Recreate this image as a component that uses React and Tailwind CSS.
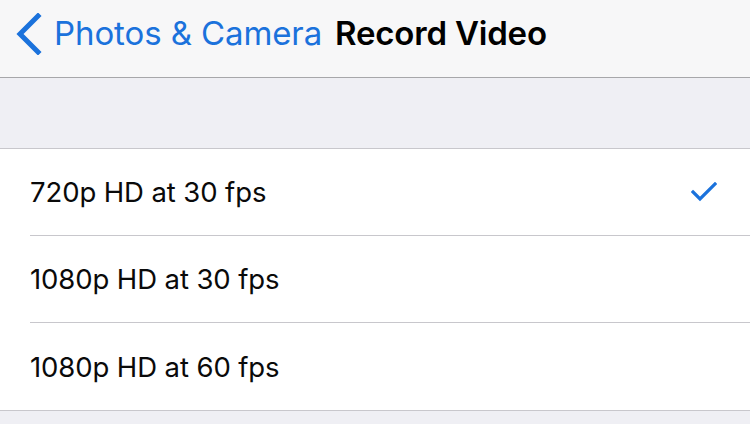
import React from "react";

const options = [
  { label: "720p HD at 30 fps", selected: true },
  { label: "1080p HD at 30 fps", selected: false },
  { label: "1080p HD at 60 fps", selected: false },
];

function BackChevron() {
  return (
    <svg width="28" height="42" viewBox="0 0 28 42" fill="none" aria-hidden="true">
      <path d="M24 3 L6 21 L24 39" stroke="#1b72dc" strokeWidth="5" strokeLinecap="square" strokeLinejoin="miter" />
    </svg>
  );
}

function Check() {
  return (
    <svg width="26" height="20" viewBox="0 0 26 20" fill="none" aria-hidden="true">
      <path d="M2 10 L9 17 L24 2" stroke="#1b72dc" strokeWidth="3.2" strokeLinecap="square" />
    </svg>
  );
}

export default function App() {
  return (
    <div className="w-[750px] h-[424px] overflow-hidden bg-[#efeff4] font-['Inter','Liberation_Sans',sans-serif]">
      <header className="h-[78px] bg-[#f7f7f8] border-b border-[#a7a7aa] flex items-center pl-[14px] pb-[9px]">
        <BackChevron />
        <span className="ml-[12px] text-[33px] text-[#1b72dc] tracking-[-0.1px]">Photos &amp; Camera</span>
        <span className="ml-[13px] text-[33px] font-semibold text-black tracking-[-0.2px]">Record Video</span>
      </header>

      <div className="h-[70px]" />

      <ul className="bg-white border-t border-b border-[#c8c7cc]">
        {options.map((opt, i) => (
          <li key={opt.label} className="pl-[30px]">
            <div
              className={
                "h-[87px] flex items-center justify-between pr-[33px] " +
                (i < options.length - 1 ? "border-b border-[#c8c7cc]" : "")
              }
            >
              <span className="text-[27.5px] text-[#0a0a0a] tracking-[-0.1px] pt-[2px]">{opt.label}</span>
              {opt.selected && <Check />}
            </div>
          </li>
        ))}
      </ul>
    </div>
  );
}
